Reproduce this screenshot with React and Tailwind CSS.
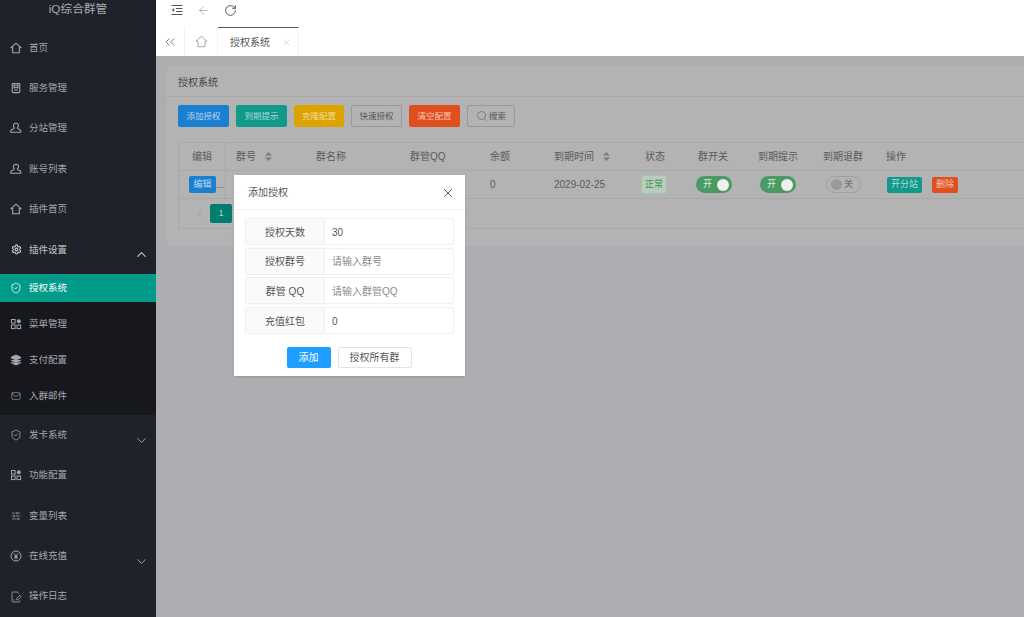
import React from 'react'
import {
  ArrowLeft, ChevronDown, ChevronLeft, ChevronUp, ChevronsLeft, FilePenLine,
  Layers, Mail, RotateCw, Search, Settings, ShieldCheck, SlidersHorizontal, X,
} from 'lucide-react'

const HomeIcon = ({ size = 12, strokeWidth = 1.1 }) => (
  <svg width={size} height={size} viewBox="0 0 12 12" fill="none" stroke="currentColor" strokeWidth={strokeWidth} strokeLinejoin="round">
    <path d="M6 1.2 11 5.6H9.3v5.2H2.7V5.6H1z" />
  </svg>
)

const BookIcon = ({ size = 12 }) => (
  <svg width={size} height={size} viewBox="0 0 12 12" fill="none" stroke="currentColor" strokeWidth="1.1">
    <rect x="2.2" y="1.6" width="7.6" height="9" rx="0.8" />
    <path d="M4 3.2h4v2.4H4zM4 8h4" />
  </svg>
)

const UserIcon = ({ size = 12 }) => (
  <svg width={size} height={size} viewBox="0 0 12 12" fill="none" stroke="currentColor" strokeWidth="1.1" strokeLinejoin="round">
    <path d="M6 1.2c1.5 0 2.5 1 2.5 2.4 0 1-.5 1.8-1.2 2.2 0 .6.4.9 1.2 1.2 1.2.4 2.3.9 2.3 1.8v1.4H.8V8.800c0-.9 1.100-1.400 2.300-1.800.8-.3 1.200-.6 1.200-1.200C3.600 5.400 3.500 4.600 3.500 3.600 3.500 2.200 4.500 1.200 6 1.200z" />
  </svg>
)

const GridIcon = ({ size = 12 }) => (
  <svg width={size} height={size} viewBox="0 0 12 12" fill="none" stroke="currentColor" strokeWidth="1">
    <rect x="1.5" y="1.500" width="3.600" height="3.600" />
    <rect x="1.500" y="7" width="3.600" height="3.600" />
    <rect x="7" y="7" width="3.600" height="3.600" />
    <circle cx="8.800" cy="3.300" r="2" fill="currentColor" stroke="none" />
  </svg>
)

const StackIcon = ({ size = 12 }) => (
  <Layers size={size} strokeWidth={1.4} fill="currentColor" />
)

const ShieldIcon = ({ size = 12 }) => <ShieldCheck size={size} strokeWidth={1.6} />
const MailIcon = () => <Mail size={10} strokeWidth={1.5} />
const SliderIcon = () => <SlidersHorizontal size={10} strokeWidth={1.7} />
const LogIcon = ({ size = 12 }) => <FilePenLine size={size} strokeWidth={1.6} />

const YenIcon = ({ size = 12 }) => (
  <svg width={size} height={size} viewBox="0 0 12 12" fill="none" stroke="currentColor" strokeWidth="1">
    <circle cx="6" cy="6" r="5" />
    <path d="M4 3.400 6 6l2-2.600M6 6v3M4.400 6.400h3.200M4.400 7.800h3.200" />
  </svg>
)

const FoldIcon = () => (
  <svg width="12" height="12" viewBox="0 0 12 12" fill="none" stroke="currentColor" strokeWidth="1.200">
    <path d="M.5 1.500h11M5 4.500h6.500M5 7.500h6.500M.5 10.500h11" />
    <path d="M3.200 4v4L.8 6z" fill="currentColor" stroke="none" />
  </svg>
)

const SortIcon = () => (
  <svg width="7" height="9" viewBox="0 0 7 9" className="fill-[#7d7d7d]">
    <path d="M3.500 0 7 3.600H0zM3.500 9 0 5.400h7z" />
  </svg>
)

const topMenu = [
  { name: '首页', icon: HomeIcon },
  { name: '服务管理', icon: BookIcon },
  { name: '分站管理', icon: UserIcon },
  { name: '账号列表', icon: UserIcon },
  { name: '插件首页', icon: HomeIcon },
]

const subMenu = [
  { name: '授权系统', icon: ShieldIcon, active: true },
  { name: '菜单管理', icon: GridIcon },
  { name: '支付配置', icon: StackIcon },
  { name: '入群邮件', icon: MailIcon },
]

const bottomMenu = [
  { name: '发卡系统', icon: ShieldIcon, arrow: true },
  { name: '功能配置', icon: GridIcon },
  { name: '变量列表', icon: SliderIcon },
  { name: '在线充值', icon: YenIcon, arrow: true },
  { name: '操作日志', icon: LogIcon },
]

const toolbar = [
  { label: '添加授权', cls: 'w-[51px] bg-[#1b7fd0] border-[#1b7fd0] text-[#b9d8f0]' },
  { label: '到期提示', cls: 'w-[51px] bg-[#11998a] border-[#11998a] text-[#a9dcd6]' },
  { label: '克隆配置', cls: 'w-[50px] bg-[#dca300] border-[#dca300] text-[#f3dc9a]' },
  { label: '快速授权', cls: 'w-[51px] border-[#999999] text-[#555555]' },
  { label: '清空配置', cls: 'w-[51px] bg-[#e0501f] border-[#e0501f] text-[#f5c4b2]' },
]

const columns = [
  { label: '编辑', cls: 'justify-center border-r border-[#a9a9a9]' },
  { label: '群号', sort: true, cls: 'pl-2.5' },
  { label: '群名称', cls: 'pl-2.5' },
  { label: '群管QQ', cls: 'pl-2.5' },
  { label: '余额', cls: 'pl-2.5' },
  { label: '到期时间', sort: true, cls: 'pl-2.5' },
  { label: '状态', cls: 'pl-2.5' },
  { label: '群开关', cls: 'pl-2.5' },
  { label: '到期提示', cls: 'pl-2.5' },
  { label: '到期退群', cls: 'pl-2.5' },
  { label: '操作', cls: 'pl-2.5' },
]

const gridCols = 'grid-cols-[47px_80px_94px_80px_64px_91px_53px_60px_65px_63px_1fr]'

const formRows = [
  { label: '授权天数', value: '30' },
  { label: '授权群号', placeholder: '请输入群号' },
  { label: '群管 QQ', placeholder: '请输入群管QQ' },
  { label: '充值红包', value: '0' },
]

const MenuItem = ({ item, sub }) => {
  const Icon = item.icon
  return (
    <div className={`flex items-center pl-[10px] pr-[7px] text-[9.5px] ${sub ? 'h-9' : 'h-[40.4px]'} ${item.active ? 'my-1 !h-7 bg-[#009a88] text-white' : 'text-[#a6a7aa]'}`}>
      <span className="flex w-3 justify-center"><Icon size={12} /></span>
      <span className="ml-[7px] flex-1">{item.name}</span>
      {item.arrow && <ChevronDown size={15} strokeWidth={1.5} className="mt-2.5" />}
    </div>
  )
}

const Toggle = ({ on, cls }) => (
  on ? (
    <div className={`flex h-[17px] w-9 items-center justify-between rounded-full bg-[#4a9a64] pl-[7px] pr-[3px] text-[9px] text-[#d5e8da] ${cls}`}>
      <span>开</span>
      <span className="h-3 w-3 rounded-full bg-[#efefef]" />
    </div>
  ) : (
    <div className={`flex h-[17px] w-[35px] items-center justify-between rounded-full border border-[#a0a0a0] pl-1 pr-[7px] text-[9px] text-[#707070] ${cls}`}>
      <span className="h-[11px] w-[11px] rounded-full bg-[#9a9a9a]" />
      <span>关</span>
    </div>
  )
)

export default function App() {
  return (
    <div className="relative flex h-[617px] w-[1024px] overflow-hidden bg-[#adaeb2] font-['Liberation_Sans','Noto_Sans_CJK_SC',sans-serif] text-[10px] text-[#555555]">
      <aside className="w-[156px] shrink-0 bg-[#1f222a]">
        <div className="flex h-[27.5px] items-start justify-center pt-[1px] text-[11.7px] leading-4 text-[#a9aaad]">iQ综合群管</div>
        {topMenu.map((item) => <MenuItem key={item.name} item={item} />)}
        <div className="flex h-[40.4px] items-center pl-[10px] pr-[7px] text-[9.5px] text-[#c4c5c7]">
          <span className="flex w-3 justify-center"><Settings size={11} strokeWidth={2.4} /></span>
          <span className="ml-[7px] flex-1">插件设置</span>
          <ChevronUp size={15} strokeWidth={1.8} className="mt-2.5" />
        </div>
        <div className="bg-[#16181d] pb-px">
          {subMenu.map((item) => <MenuItem key={item.name} item={item} sub />)}
        </div>
        {bottomMenu.map((item) => <MenuItem key={item.name} item={item} />)}
      </aside>

      <main className="flex min-w-0 flex-1 flex-col">
        <header className="flex h-[27px] items-center gap-[14px] bg-white pb-[7px] pl-[15px] text-[#555555]">
          <FoldIcon />
          <ArrowLeft size={13} strokeWidth={1.1} className="text-[#8a8a8a]" />
          <RotateCw size={13} strokeWidth={1.8} />
        </header>

        <nav className="flex h-[29px] bg-white">
          <div className="flex w-[29px] items-center justify-center border-r border-[#f3f3f3] text-[#666666]">
            <ChevronsLeft size={16} strokeWidth={1.2} />
          </div>
          <div className="flex w-[33px] items-center justify-center border-r border-[#f3f3f3] text-[#999999]">
            <HomeIcon size={13} strokeWidth={0.8} />
          </div>
          <div className="flex w-[81px] items-center border-r border-t border-r-[#f3f3f3] border-t-[#555555] pl-3 text-[#555555]">
            <span>授权系统</span>
            <X size={9} strokeWidth={1} className="ml-3 text-[#aaaaaa]" />
          </div>
        </nav>

        <section className="p-2.5 pr-0">
          <div className="h-[180px] rounded-l-md bg-[#b3b3b3]">
            <div className="flex h-[31px] items-center border-b border-[#a9a9a9] px-3 pt-[3px] text-[#444444]">授权系统</div>
            <div className="flex gap-[7px] px-3 pt-2">
              {toolbar.map((btn) => (
                <button key={btn.label} className={`h-[22px] rounded-[2px] border text-[8.5px] ${btn.cls}`}>{btn.label}</button>
              ))}
              <button className="flex h-[22px] w-12 items-center justify-center gap-px rounded-[2px] border border-[#999999] text-[8.5px] text-[#555555]">
                <Search size={12} strokeWidth={1.1} />
                搜索
              </button>
            </div>

            <div className="ml-3 mt-[15px] border-y border-l border-[#a9a9a9] text-[#5a5a5a]">
              <div className={`grid h-7 border-b border-[#a9a9a9] ${gridCols}`}>
                {columns.map((col) => (
                  <div key={col.label} className={`flex items-center gap-[9px] ${col.cls}`}>
                    {col.label}
                    {col.sort && <SortIcon />}
                  </div>
                ))}
              </div>

              <div className={`grid h-7 items-center border-b border-[#a9a9a9] ${gridCols}`}>
                <div className="flex h-full items-center border-r border-[#a9a9a9] pl-2.5">
                  <span className="flex h-[17px] w-[27px] shrink-0 items-center justify-center rounded-[2px] bg-[#1b7fd0] text-[9px] text-[#b9d8f0]">编辑</span>
                  <span>...</span>
                </div>
                <div />
                <div />
                <div />
                <div className="pl-2.5">0</div>
                <div className="pl-2.5">2029-02-25</div>
                <div className="pl-1.5">
                  <span className="flex h-[19px] w-[26px] items-center justify-center rounded-[3px] border border-[#9fc4a8] bg-[#bccbbf] text-[9px] text-[#2f9a48]">正常</span>
                </div>
                <div><Toggle on cls="ml-2" /></div>
                <div><Toggle on cls="ml-3" /></div>
                <div><Toggle cls="ml-[13px]" /></div>
                <div className="flex items-center gap-[10px] pl-[11px] text-[9px]">
                  <span className="flex h-4 w-[35px] items-center justify-center rounded-[2px] bg-[#11998a] text-[#a9dcd6]">开分站</span>
                  <span className="flex h-4 w-[26px] items-center justify-center rounded-[2px] bg-[#e0501f] text-[#f5c4b2]">删除</span>
                </div>
              </div>

              <div className="flex h-[29px] items-center pl-3.5">
                <ChevronLeft size={13} strokeWidth={1} className="text-[#8f8f8f]" />
                <span className="ml-1 flex h-[19px] w-[22px] items-center justify-center rounded-[2px] bg-[#007d6e] text-[9px] text-[#b8d8d4]">1</span>
              </div>
            </div>
          </div>
        </section>
      </main>

      <div className="absolute left-[234px] top-[175px] h-[201px] w-[231px] bg-white text-[#555555] shadow-sm">
        <div className="flex h-[35px] items-center justify-between border-b border-[#f0f0f0] pl-3.5 pr-[10px] pt-px">
          <span className="text-[#555555]">添加授权</span>
          <X size={14} strokeWidth={1.4} className="text-[#333333]" />
        </div>
        <div className="mx-[11px] mt-2 flex flex-col gap-[2.7px]">
          {formRows.map((row) => (
            <div key={row.label} className="flex h-[27px] rounded-[2px] border border-[#f0f0f0] pt-px">
              <div className="-mt-px flex w-[79px] items-center justify-center border-r border-[#f0f0f0] bg-[#fafafa] pt-px">{row.label}</div>
              <div className={`flex flex-1 items-center pl-[7px] ${row.value ? '' : 'text-[#8d8d8d]'}`}>{row.value || row.placeholder}</div>
            </div>
          ))}
        </div>
        <div className="mt-[13px] flex justify-center gap-[7px] pr-px">
          <button className="h-[21px] w-11 rounded-[2px] bg-[#1e9fff] text-white">添加</button>
          <button className="h-[21px] w-[74px] rounded-[2px] border border-[#e4e4e4] text-[#555555]">授权所有群</button>
        </div>
      </div>
    </div>
  )
}
